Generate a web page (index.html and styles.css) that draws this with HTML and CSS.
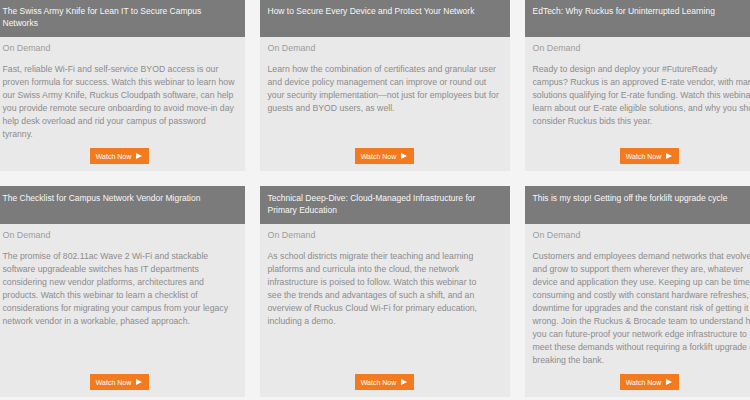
FILE: index.html
```html
<!DOCTYPE html>
<html>
<head>
<meta charset="utf-8">
<link rel="stylesheet" href="styles.css">
</head>
<body>
<div class="grid">
  <div class="card">
    <div class="card-head">The Swiss Army Knife for Lean IT to Secure Campus Networks</div>
    <div class="card-body">
      <div class="meta">On Demand</div>
      <p class="desc">Fast, reliable Wi-Fi and self-service BYOD access is our proven formula for success. Watch this webinar to learn how our Swiss Army Knife, Ruckus Cloudpath software, can help you provide remote secure onboarding to avoid move-in day help desk overload and rid your campus of password tyranny.</p>
      <a class="btn" href="#">Watch Now <span class="play"></span></a>
    </div>
  </div>
  <div class="card">
    <div class="card-head">How to Secure Every Device and Protect Your Network</div>
    <div class="card-body">
      <div class="meta">On Demand</div>
      <p class="desc">Learn how the combination of certificates and granular user and device policy management can improve or round out your security implementation—not just for employees but for guests and BYOD users, as well.</p>
      <a class="btn" href="#">Watch Now <span class="play"></span></a>
    </div>
  </div>
  <div class="card">
    <div class="card-head">EdTech: Why Ruckus for Uninterrupted Learning</div>
    <div class="card-body">
      <div class="meta">On Demand</div>
      <p class="desc">Ready to design and deploy your #FutureReady<br>campus? Ruckus is an approved E-rate vendor, with many solutions qualifying for E-rate funding. Watch this webinar to learn about our E-rate eligible solutions, and why you should consider Ruckus bids this year.</p>
      <a class="btn" href="#">Watch Now <span class="play"></span></a>
    </div>
  </div>
  <div class="card">
    <div class="card-head">The Checklist for Campus Network Vendor Migration</div>
    <div class="card-body">
      <div class="meta">On Demand</div>
      <p class="desc">The promise of 802.11ac Wave 2 Wi-Fi and stackable software upgradeable switches has IT departments considering new vendor platforms, architectures and products. Watch this webinar to learn a checklist of considerations for migrating your campus from your legacy network vendor in a workable, phased approach.</p>
      <a class="btn" href="#">Watch Now <span class="play"></span></a>
    </div>
  </div>
  <div class="card">
    <div class="card-head">Technical Deep-Dive: Cloud-Managed Infrastructure for Primary Education</div>
    <div class="card-body">
      <div class="meta">On Demand</div>
      <p class="desc">As school districts migrate their teaching and learning platforms and curricula into the cloud, the network infrastructure is poised to follow. Watch this webinar to<br>see the trends and advantages of such a shift, and an<br>overview of Ruckus Cloud Wi-Fi for primary education, including a demo.</p>
      <a class="btn" href="#">Watch Now <span class="play"></span></a>
    </div>
  </div>
  <div class="card">
    <div class="card-head">This is my stop! Getting off the forklift upgrade cycle</div>
    <div class="card-body">
      <div class="meta">On Demand</div>
      <p class="desc">Customers and employees demand networks that evolve and grow to support them wherever they are, whatever device and application they use. Keeping up can be time consuming and costly with constant hardware refreshes, downtime for upgrades and the constant risk of getting it wrong. Join the Ruckus &amp; Brocade team to understand how you can future-proof your network edge infrastructure to meet these demands without requiring a forklift upgrade or breaking the bank.</p>
      <a class="btn" href="#">Watch Now <span class="play"></span></a>
    </div>
  </div>
</div>
</body>
</html>
```

FILE: styles.css
```css
html, body {
  margin: 0;
  padding: 0;
  background: #f4f4f4;
  overflow: hidden;
}
body {
  font-family: "Liberation Sans", Arial, sans-serif;
}
.grid {
  display: grid;
  grid-template-columns: repeat(3, 250px);
  column-gap: 15px;
  row-gap: 15px;
  margin-left: -5.5px;
  margin-top: -1px;
  width: 800px;
}
.card {
  display: flex;
  flex-direction: column;
  background: #e9e9e9;
}
.card-head {
  box-sizing: border-box;
  height: 38px;
  padding: 5.5px 8px 0;
  background: #7b7b7b;
  color: #f8f8f8;
  font-size: 8.5px;
  line-height: 12.5px;
}
.card-body {
  flex: 1;
  display: flex;
  flex-direction: column;
  align-items: flex-start;
  padding: 5px 8px 7px;
}
.meta {
  color: #9c9c9c;
  font-size: 8.9px;
  line-height: 13px;
}
.desc {
  margin: 7.5px 0 7.5px;
  color: #8c8c8c;
  font-size: 8.7px;
  line-height: 13px;
}
.btn {
  margin-top: auto;
  align-self: center;
  display: flex;
  align-items: center;
  gap: 5px;
  box-sizing: border-box;
  height: 16px;
  padding: 0 7px 0 6px;
  background: #f47a20;
  color: #fff;
  font-size: 7px;
  text-decoration: none;
}
.play {
  width: 0;
  height: 0;
  border-top: 3.5px solid transparent;
  border-bottom: 3.5px solid transparent;
  border-left: 6px solid #fff;
}
```
